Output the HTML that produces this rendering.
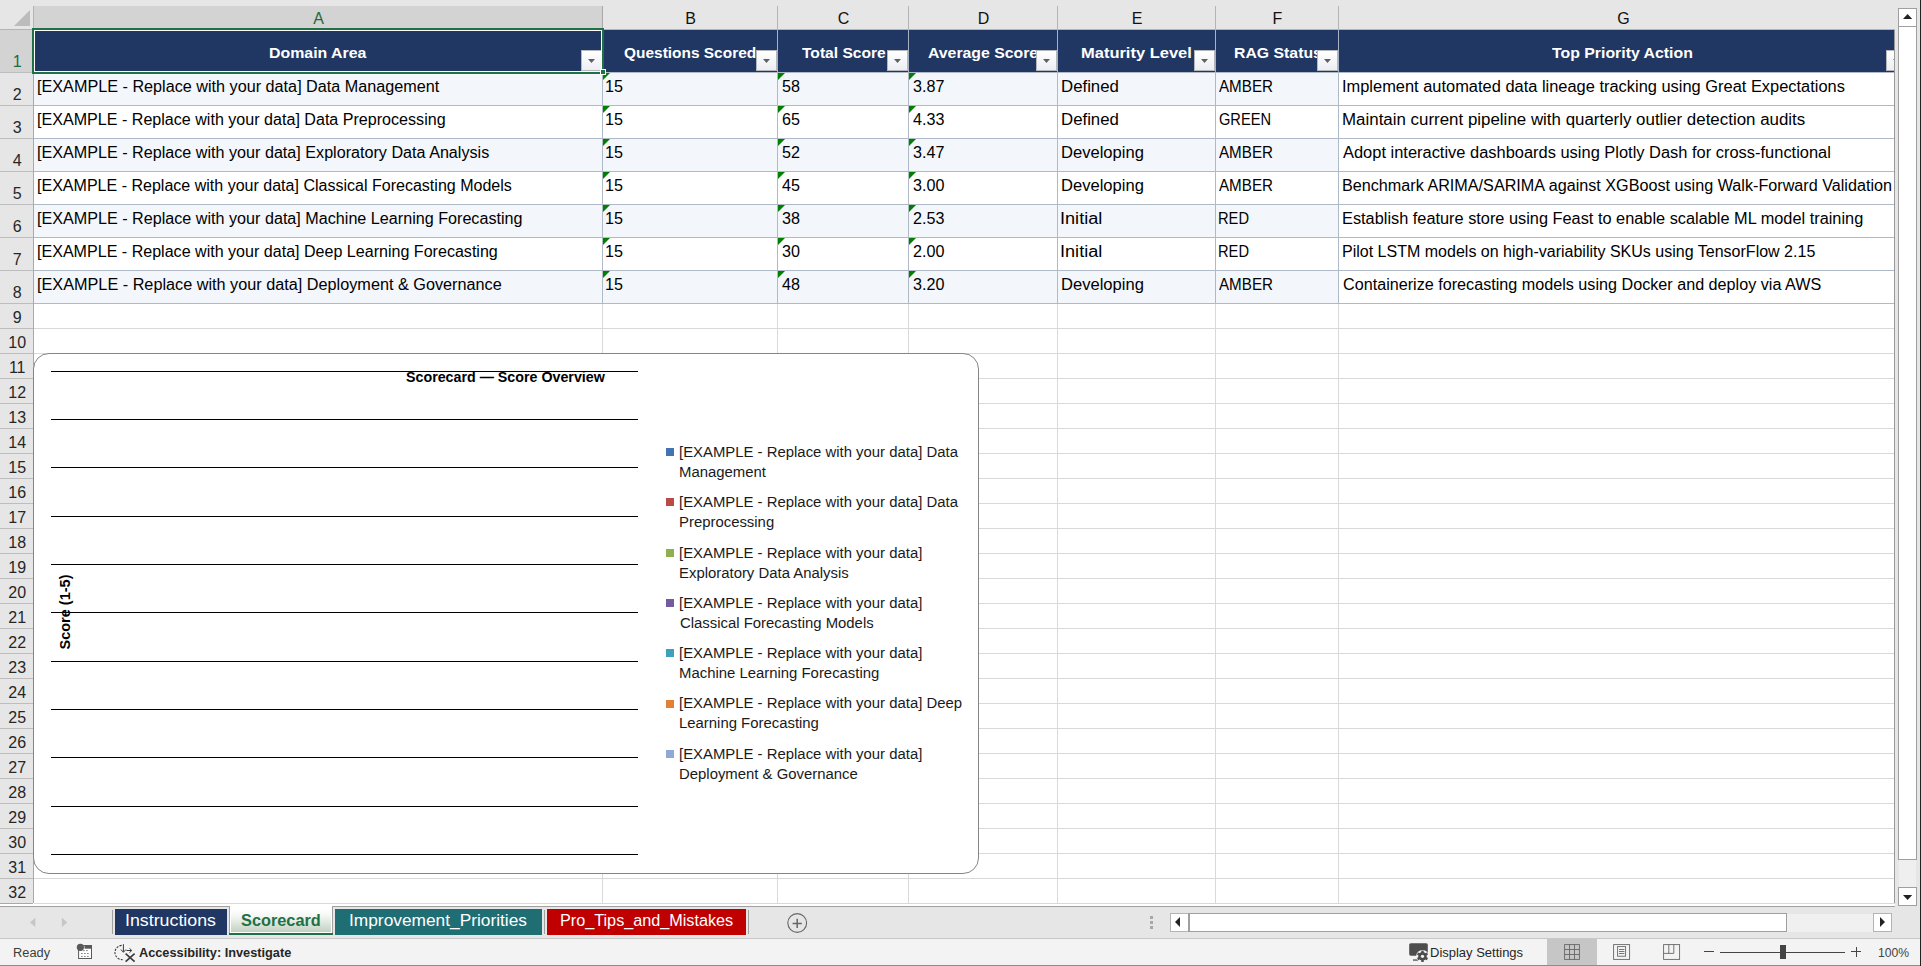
<!DOCTYPE html>
<html><head><meta charset="utf-8"><style>
html,body{margin:0;padding:0;}
body{width:1921px;height:966px;position:relative;overflow:hidden;background:#fff;font-family:"Liberation Sans", sans-serif;}
body div{position:absolute;box-sizing:content-box;}
.t{white-space:nowrap;}
</style></head><body>
<div style="left:0px;top:0px;width:1921px;height:29px;background:#e6e6e6"></div><div style="left:0px;top:29px;width:33px;height:874px;background:#e6e6e6"></div><div style="left:34px;top:6px;width:568px;height:22px;background:#d3d3d3"></div><div style="left:0px;top:30px;width:33px;height:42px;background:#d3d3d3"></div><div style="left:33px;top:6px;width:1px;height:23px;background:#b4b4b4"></div><div style="left:602px;top:6px;width:1px;height:23px;background:#b4b4b4"></div><div style="left:777px;top:6px;width:1px;height:23px;background:#b4b4b4"></div><div style="left:908px;top:6px;width:1px;height:23px;background:#b4b4b4"></div><div style="left:1057px;top:6px;width:1px;height:23px;background:#b4b4b4"></div><div style="left:1215px;top:6px;width:1px;height:23px;background:#b4b4b4"></div><div style="left:1338px;top:6px;width:1px;height:23px;background:#b4b4b4"></div><div style="left:602px;top:6px;width:1px;height:23px;background:#a9a9a9"></div><div style="left:0px;top:29px;width:1895px;height:1px;background:#b4b4b4"></div><svg style="position:absolute;left:14px;top:10px" width="17" height="17"><polygon points="16,0 16,16 0,16" fill="#bcbcbc"/></svg><div class="t" style="left:313.16px;top:11.26px;font-size:16px;line-height:16px;font-weight:400;color:#1e6b3e;">A</div><div class="t" style="left:685.16px;top:11.26px;font-size:16px;line-height:16px;font-weight:400;color:#111;">B</div><div class="t" style="left:837.72px;top:11.26px;font-size:16px;line-height:16px;font-weight:400;color:#111;">C</div><div class="t" style="left:977.72px;top:11.26px;font-size:16px;line-height:16px;font-weight:400;color:#111;">D</div><div class="t" style="left:1131.66px;top:11.26px;font-size:16px;line-height:16px;font-weight:400;color:#111;">E</div><div class="t" style="left:1272.61px;top:11.26px;font-size:16px;line-height:16px;font-weight:400;color:#111;">F</div><div class="t" style="left:1617.28px;top:11.26px;font-size:16px;line-height:16px;font-weight:400;color:#111;">G</div><div style="left:0px;top:72px;width:33px;height:1px;background:#bdbdbd"></div><div class="t" style="left:12.75px;top:54.26px;font-size:16px;line-height:16px;font-weight:400;color:#1e6b3e;">1</div><div style="left:0px;top:105px;width:33px;height:1px;background:#bdbdbd"></div><div class="t" style="left:12.75px;top:87.26px;font-size:16px;line-height:16px;font-weight:400;color:#262626;">2</div><div style="left:0px;top:138px;width:33px;height:1px;background:#bdbdbd"></div><div class="t" style="left:12.75px;top:120.26px;font-size:16px;line-height:16px;font-weight:400;color:#262626;">3</div><div style="left:0px;top:171px;width:33px;height:1px;background:#bdbdbd"></div><div class="t" style="left:12.75px;top:153.26px;font-size:16px;line-height:16px;font-weight:400;color:#262626;">4</div><div style="left:0px;top:204px;width:33px;height:1px;background:#bdbdbd"></div><div class="t" style="left:12.75px;top:186.26px;font-size:16px;line-height:16px;font-weight:400;color:#262626;">5</div><div style="left:0px;top:237px;width:33px;height:1px;background:#bdbdbd"></div><div class="t" style="left:12.75px;top:219.26px;font-size:16px;line-height:16px;font-weight:400;color:#262626;">6</div><div style="left:0px;top:270px;width:33px;height:1px;background:#bdbdbd"></div><div class="t" style="left:12.75px;top:252.26px;font-size:16px;line-height:16px;font-weight:400;color:#262626;">7</div><div style="left:0px;top:303px;width:33px;height:1px;background:#bdbdbd"></div><div class="t" style="left:12.75px;top:285.26px;font-size:16px;line-height:16px;font-weight:400;color:#262626;">8</div><div style="left:0px;top:328px;width:33px;height:1px;background:#bdbdbd"></div><div class="t" style="left:12.75px;top:310.26px;font-size:16px;line-height:16px;font-weight:400;color:#262626;">9</div><div style="left:0px;top:353px;width:33px;height:1px;background:#bdbdbd"></div><div class="t" style="left:8.30px;top:335.26px;font-size:16px;line-height:16px;font-weight:400;color:#262626;">10</div><div style="left:0px;top:378px;width:33px;height:1px;background:#bdbdbd"></div><div class="t" style="left:8.90px;top:360.26px;font-size:16px;line-height:16px;font-weight:400;color:#262626;">11</div><div style="left:0px;top:403px;width:33px;height:1px;background:#bdbdbd"></div><div class="t" style="left:8.30px;top:385.26px;font-size:16px;line-height:16px;font-weight:400;color:#262626;">12</div><div style="left:0px;top:428px;width:33px;height:1px;background:#bdbdbd"></div><div class="t" style="left:8.30px;top:410.26px;font-size:16px;line-height:16px;font-weight:400;color:#262626;">13</div><div style="left:0px;top:453px;width:33px;height:1px;background:#bdbdbd"></div><div class="t" style="left:8.30px;top:435.26px;font-size:16px;line-height:16px;font-weight:400;color:#262626;">14</div><div style="left:0px;top:478px;width:33px;height:1px;background:#bdbdbd"></div><div class="t" style="left:8.30px;top:460.26px;font-size:16px;line-height:16px;font-weight:400;color:#262626;">15</div><div style="left:0px;top:503px;width:33px;height:1px;background:#bdbdbd"></div><div class="t" style="left:8.30px;top:485.26px;font-size:16px;line-height:16px;font-weight:400;color:#262626;">16</div><div style="left:0px;top:528px;width:33px;height:1px;background:#bdbdbd"></div><div class="t" style="left:8.30px;top:510.26px;font-size:16px;line-height:16px;font-weight:400;color:#262626;">17</div><div style="left:0px;top:553px;width:33px;height:1px;background:#bdbdbd"></div><div class="t" style="left:8.30px;top:535.26px;font-size:16px;line-height:16px;font-weight:400;color:#262626;">18</div><div style="left:0px;top:578px;width:33px;height:1px;background:#bdbdbd"></div><div class="t" style="left:8.30px;top:560.26px;font-size:16px;line-height:16px;font-weight:400;color:#262626;">19</div><div style="left:0px;top:603px;width:33px;height:1px;background:#bdbdbd"></div><div class="t" style="left:8.30px;top:585.26px;font-size:16px;line-height:16px;font-weight:400;color:#262626;">20</div><div style="left:0px;top:628px;width:33px;height:1px;background:#bdbdbd"></div><div class="t" style="left:8.30px;top:610.26px;font-size:16px;line-height:16px;font-weight:400;color:#262626;">21</div><div style="left:0px;top:653px;width:33px;height:1px;background:#bdbdbd"></div><div class="t" style="left:8.30px;top:635.26px;font-size:16px;line-height:16px;font-weight:400;color:#262626;">22</div><div style="left:0px;top:678px;width:33px;height:1px;background:#bdbdbd"></div><div class="t" style="left:8.30px;top:660.26px;font-size:16px;line-height:16px;font-weight:400;color:#262626;">23</div><div style="left:0px;top:703px;width:33px;height:1px;background:#bdbdbd"></div><div class="t" style="left:8.30px;top:685.26px;font-size:16px;line-height:16px;font-weight:400;color:#262626;">24</div><div style="left:0px;top:728px;width:33px;height:1px;background:#bdbdbd"></div><div class="t" style="left:8.30px;top:710.26px;font-size:16px;line-height:16px;font-weight:400;color:#262626;">25</div><div style="left:0px;top:753px;width:33px;height:1px;background:#bdbdbd"></div><div class="t" style="left:8.30px;top:735.26px;font-size:16px;line-height:16px;font-weight:400;color:#262626;">26</div><div style="left:0px;top:778px;width:33px;height:1px;background:#bdbdbd"></div><div class="t" style="left:8.30px;top:760.26px;font-size:16px;line-height:16px;font-weight:400;color:#262626;">27</div><div style="left:0px;top:803px;width:33px;height:1px;background:#bdbdbd"></div><div class="t" style="left:8.30px;top:785.26px;font-size:16px;line-height:16px;font-weight:400;color:#262626;">28</div><div style="left:0px;top:828px;width:33px;height:1px;background:#bdbdbd"></div><div class="t" style="left:8.30px;top:810.26px;font-size:16px;line-height:16px;font-weight:400;color:#262626;">29</div><div style="left:0px;top:853px;width:33px;height:1px;background:#bdbdbd"></div><div class="t" style="left:8.30px;top:835.26px;font-size:16px;line-height:16px;font-weight:400;color:#262626;">30</div><div style="left:0px;top:878px;width:33px;height:1px;background:#bdbdbd"></div><div class="t" style="left:8.30px;top:860.26px;font-size:16px;line-height:16px;font-weight:400;color:#262626;">31</div><div style="left:0px;top:903px;width:33px;height:1px;background:#bdbdbd"></div><div class="t" style="left:8.30px;top:885.26px;font-size:16px;line-height:16px;font-weight:400;color:#262626;">32</div><div style="left:33px;top:29px;width:1px;height:874px;background:#a9a9a9"></div><div style="left:34px;top:30px;width:1861px;height:873px;background:#fff"></div><div style="left:34px;top:328px;width:1861px;height:1px;background:#d9d9d9"></div><div style="left:34px;top:353px;width:1861px;height:1px;background:#d9d9d9"></div><div style="left:34px;top:378px;width:1861px;height:1px;background:#d9d9d9"></div><div style="left:34px;top:403px;width:1861px;height:1px;background:#d9d9d9"></div><div style="left:34px;top:428px;width:1861px;height:1px;background:#d9d9d9"></div><div style="left:34px;top:453px;width:1861px;height:1px;background:#d9d9d9"></div><div style="left:34px;top:478px;width:1861px;height:1px;background:#d9d9d9"></div><div style="left:34px;top:503px;width:1861px;height:1px;background:#d9d9d9"></div><div style="left:34px;top:528px;width:1861px;height:1px;background:#d9d9d9"></div><div style="left:34px;top:553px;width:1861px;height:1px;background:#d9d9d9"></div><div style="left:34px;top:578px;width:1861px;height:1px;background:#d9d9d9"></div><div style="left:34px;top:603px;width:1861px;height:1px;background:#d9d9d9"></div><div style="left:34px;top:628px;width:1861px;height:1px;background:#d9d9d9"></div><div style="left:34px;top:653px;width:1861px;height:1px;background:#d9d9d9"></div><div style="left:34px;top:678px;width:1861px;height:1px;background:#d9d9d9"></div><div style="left:34px;top:703px;width:1861px;height:1px;background:#d9d9d9"></div><div style="left:34px;top:728px;width:1861px;height:1px;background:#d9d9d9"></div><div style="left:34px;top:753px;width:1861px;height:1px;background:#d9d9d9"></div><div style="left:34px;top:778px;width:1861px;height:1px;background:#d9d9d9"></div><div style="left:34px;top:803px;width:1861px;height:1px;background:#d9d9d9"></div><div style="left:34px;top:828px;width:1861px;height:1px;background:#d9d9d9"></div><div style="left:34px;top:853px;width:1861px;height:1px;background:#d9d9d9"></div><div style="left:34px;top:878px;width:1861px;height:1px;background:#d9d9d9"></div><div style="left:34px;top:903px;width:1861px;height:1px;background:#d9d9d9"></div><div style="left:602px;top:303px;width:1px;height:600px;background:#d9d9d9"></div><div style="left:777px;top:303px;width:1px;height:600px;background:#d9d9d9"></div><div style="left:908px;top:303px;width:1px;height:600px;background:#d9d9d9"></div><div style="left:1057px;top:303px;width:1px;height:600px;background:#d9d9d9"></div><div style="left:1215px;top:303px;width:1px;height:600px;background:#d9d9d9"></div><div style="left:1338px;top:303px;width:1px;height:600px;background:#d9d9d9"></div><div style="left:34px;top:30px;width:1861px;height:42px;background:#203764"></div><div class="t" style="left:268.67px;top:44.88px;font-size:15.5px;line-height:15.5px;font-weight:700;color:#fff;transform:scaleX(1.0254);transform-origin:0 0;">Domain Area</div><div class="t" style="left:623.80px;top:44.88px;font-size:15.5px;line-height:15.5px;font-weight:700;color:#fff;transform:scaleX(0.9964);transform-origin:0 0;">Questions Scored</div><div class="t" style="left:801.50px;top:44.88px;font-size:15.5px;line-height:15.5px;font-weight:700;color:#fff;transform:scaleX(1.0055);transform-origin:0 0;">Total Score</div><div class="t" style="left:928.43px;top:44.88px;font-size:15.5px;line-height:15.5px;font-weight:700;color:#fff;transform:scaleX(1.0200);transform-origin:0 0;">Average Score</div><div class="t" style="left:1081.34px;top:44.88px;font-size:15.5px;line-height:15.5px;font-weight:700;color:#fff;transform:scaleX(1.0630);transform-origin:0 0;">Maturity Level</div><div class="t" style="left:1233.58px;top:44.88px;font-size:15.5px;line-height:15.5px;font-weight:700;color:#fff;transform:scaleX(1.0200);transform-origin:0 0;">RAG Status</div><div class="t" style="left:1552.40px;top:44.88px;font-size:15.5px;line-height:15.5px;font-weight:700;color:#fff;transform:scaleX(1.0226);transform-origin:0 0;">Top Priority Action</div><div style="left:602px;top:30px;width:1px;height:42px;background:#a6b1c4"></div><div style="left:777px;top:30px;width:1px;height:42px;background:#a6b1c4"></div><div style="left:908px;top:30px;width:1px;height:42px;background:#a6b1c4"></div><div style="left:1057px;top:30px;width:1px;height:42px;background:#a6b1c4"></div><div style="left:1215px;top:30px;width:1px;height:42px;background:#a6b1c4"></div><div style="left:1338px;top:30px;width:1px;height:42px;background:#a6b1c4"></div><div style="left:581px;top:50px;width:19px;height:19px;border:1px solid #b4b7bd;background:linear-gradient(#ffffff,#eceef3);"></div><svg style="position:absolute;left:588px;top:59px" width="8" height="5"><polygon points="0,0 7,0 3.5,4" fill="#606060"/></svg><div style="left:756px;top:50px;width:19px;height:19px;border:1px solid #b4b7bd;background:linear-gradient(#ffffff,#eceef3);"></div><svg style="position:absolute;left:763px;top:59px" width="8" height="5"><polygon points="0,0 7,0 3.5,4" fill="#606060"/></svg><div style="left:887px;top:50px;width:19px;height:19px;border:1px solid #b4b7bd;background:linear-gradient(#ffffff,#eceef3);"></div><svg style="position:absolute;left:894px;top:59px" width="8" height="5"><polygon points="0,0 7,0 3.5,4" fill="#606060"/></svg><div style="left:1036px;top:50px;width:19px;height:19px;border:1px solid #b4b7bd;background:linear-gradient(#ffffff,#eceef3);"></div><svg style="position:absolute;left:1043px;top:59px" width="8" height="5"><polygon points="0,0 7,0 3.5,4" fill="#606060"/></svg><div style="left:1194px;top:50px;width:19px;height:19px;border:1px solid #b4b7bd;background:linear-gradient(#ffffff,#eceef3);"></div><svg style="position:absolute;left:1201px;top:59px" width="8" height="5"><polygon points="0,0 7,0 3.5,4" fill="#606060"/></svg><div style="left:1317px;top:50px;width:19px;height:19px;border:1px solid #b4b7bd;background:linear-gradient(#ffffff,#eceef3);"></div><svg style="position:absolute;left:1324px;top:59px" width="8" height="5"><polygon points="0,0 7,0 3.5,4" fill="#606060"/></svg><div style="left:1886px;top:50px;width:19px;height:19px;border:1px solid #b4b7bd;background:linear-gradient(#ffffff,#eceef3);"></div><svg style="position:absolute;left:1893px;top:59px" width="8" height="5"><polygon points="0,0 7,0 3.5,4" fill="#606060"/></svg><div style="left:34px;top:73px;width:1304px;height:32px;background:#f3f6fb"></div><div class="t" style="left:36.96px;top:78.79px;font-size:15.6px;line-height:15.6px;font-weight:400;color:#000;transform:scaleX(1.0385);transform-origin:0 0;">[EXAMPLE - Replace with your data] Data Management</div><div class="t" style="left:605.47px;top:78.79px;font-size:15.6px;line-height:15.6px;font-weight:400;color:#000;transform:scaleX(1.0350);transform-origin:0 0;">15</div><div class="t" style="left:781.50px;top:78.79px;font-size:15.6px;line-height:15.6px;font-weight:400;color:#000;transform:scaleX(1.0350);transform-origin:0 0;">58</div><div class="t" style="left:912.50px;top:78.79px;font-size:15.6px;line-height:15.6px;font-weight:400;color:#000;transform:scaleX(1.0350);transform-origin:0 0;">3.87</div><div class="t" style="left:1060.92px;top:78.79px;font-size:15.6px;line-height:15.6px;font-weight:400;color:#000;transform:scaleX(1.0773);transform-origin:0 0;">Defined</div><div class="t" style="left:1219.40px;top:78.79px;font-size:15.6px;line-height:15.6px;font-weight:400;color:#000;transform:scaleX(0.9730);transform-origin:0 0;">AMBER</div><div class="t" style="left:1341.95px;top:78.79px;font-size:15.6px;line-height:15.6px;font-weight:400;color:#000;transform:scaleX(1.0530);transform-origin:0 0;">Implement automated data lineage tracking using Great Expectations</div><svg style="position:absolute;left:603px;top:73px" width="8" height="8"><polygon points="0,0 7,0 0,7" fill="#008000"/></svg><svg style="position:absolute;left:778px;top:73px" width="8" height="8"><polygon points="0,0 7,0 0,7" fill="#008000"/></svg><svg style="position:absolute;left:909px;top:73px" width="8" height="8"><polygon points="0,0 7,0 0,7" fill="#008000"/></svg><div class="t" style="left:36.97px;top:111.79px;font-size:15.6px;line-height:15.6px;font-weight:400;color:#000;transform:scaleX(1.0316);transform-origin:0 0;">[EXAMPLE - Replace with your data] Data Preprocessing</div><div class="t" style="left:605.47px;top:111.79px;font-size:15.6px;line-height:15.6px;font-weight:400;color:#000;transform:scaleX(1.0350);transform-origin:0 0;">15</div><div class="t" style="left:781.50px;top:111.79px;font-size:15.6px;line-height:15.6px;font-weight:400;color:#000;transform:scaleX(1.0350);transform-origin:0 0;">65</div><div class="t" style="left:912.50px;top:111.79px;font-size:15.6px;line-height:15.6px;font-weight:400;color:#000;transform:scaleX(1.0350);transform-origin:0 0;">4.33</div><div class="t" style="left:1060.92px;top:111.79px;font-size:15.6px;line-height:15.6px;font-weight:400;color:#000;transform:scaleX(1.0773);transform-origin:0 0;">Defined</div><div class="t" style="left:1219.30px;top:111.79px;font-size:15.6px;line-height:15.6px;font-weight:400;color:#000;transform:scaleX(0.9374);transform-origin:0 0;">GREEN</div><div class="t" style="left:1341.92px;top:111.79px;font-size:15.6px;line-height:15.6px;font-weight:400;color:#000;transform:scaleX(1.0841);transform-origin:0 0;">Maintain current pipeline with quarterly outlier detection audits</div><svg style="position:absolute;left:603px;top:106px" width="8" height="8"><polygon points="0,0 7,0 0,7" fill="#008000"/></svg><svg style="position:absolute;left:778px;top:106px" width="8" height="8"><polygon points="0,0 7,0 0,7" fill="#008000"/></svg><svg style="position:absolute;left:909px;top:106px" width="8" height="8"><polygon points="0,0 7,0 0,7" fill="#008000"/></svg><div style="left:34px;top:139px;width:1304px;height:32px;background:#f3f6fb"></div><div class="t" style="left:36.96px;top:144.79px;font-size:15.6px;line-height:15.6px;font-weight:400;color:#000;transform:scaleX(1.0353);transform-origin:0 0;">[EXAMPLE - Replace with your data] Exploratory Data Analysis</div><div class="t" style="left:605.47px;top:144.79px;font-size:15.6px;line-height:15.6px;font-weight:400;color:#000;transform:scaleX(1.0350);transform-origin:0 0;">15</div><div class="t" style="left:781.50px;top:144.79px;font-size:15.6px;line-height:15.6px;font-weight:400;color:#000;transform:scaleX(1.0350);transform-origin:0 0;">52</div><div class="t" style="left:912.50px;top:144.79px;font-size:15.6px;line-height:15.6px;font-weight:400;color:#000;transform:scaleX(1.0350);transform-origin:0 0;">3.47</div><div class="t" style="left:1060.54px;top:144.79px;font-size:15.6px;line-height:15.6px;font-weight:400;color:#000;transform:scaleX(1.0622);transform-origin:0 0;">Developing</div><div class="t" style="left:1219.40px;top:144.79px;font-size:15.6px;line-height:15.6px;font-weight:400;color:#000;transform:scaleX(0.9730);transform-origin:0 0;">AMBER</div><div class="t" style="left:1343.00px;top:144.79px;font-size:15.6px;line-height:15.6px;font-weight:400;color:#000;transform:scaleX(1.0541);transform-origin:0 0;">Adopt interactive dashboards using Plotly Dash for cross-functional</div><svg style="position:absolute;left:603px;top:139px" width="8" height="8"><polygon points="0,0 7,0 0,7" fill="#008000"/></svg><svg style="position:absolute;left:778px;top:139px" width="8" height="8"><polygon points="0,0 7,0 0,7" fill="#008000"/></svg><svg style="position:absolute;left:909px;top:139px" width="8" height="8"><polygon points="0,0 7,0 0,7" fill="#008000"/></svg><div class="t" style="left:36.97px;top:177.79px;font-size:15.6px;line-height:15.6px;font-weight:400;color:#000;transform:scaleX(1.0279);transform-origin:0 0;">[EXAMPLE - Replace with your data] Classical Forecasting Models</div><div class="t" style="left:605.47px;top:177.79px;font-size:15.6px;line-height:15.6px;font-weight:400;color:#000;transform:scaleX(1.0350);transform-origin:0 0;">15</div><div class="t" style="left:781.50px;top:177.79px;font-size:15.6px;line-height:15.6px;font-weight:400;color:#000;transform:scaleX(1.0350);transform-origin:0 0;">45</div><div class="t" style="left:912.50px;top:177.79px;font-size:15.6px;line-height:15.6px;font-weight:400;color:#000;transform:scaleX(1.0350);transform-origin:0 0;">3.00</div><div class="t" style="left:1060.54px;top:177.79px;font-size:15.6px;line-height:15.6px;font-weight:400;color:#000;transform:scaleX(1.0622);transform-origin:0 0;">Developing</div><div class="t" style="left:1219.40px;top:177.79px;font-size:15.6px;line-height:15.6px;font-weight:400;color:#000;transform:scaleX(0.9730);transform-origin:0 0;">AMBER</div><div class="t" style="left:1341.96px;top:177.79px;font-size:15.6px;line-height:15.6px;font-weight:400;color:#000;transform:scaleX(1.0370);transform-origin:0 0;">Benchmark ARIMA/SARIMA against XGBoost using Walk-Forward Validation</div><svg style="position:absolute;left:603px;top:172px" width="8" height="8"><polygon points="0,0 7,0 0,7" fill="#008000"/></svg><svg style="position:absolute;left:778px;top:172px" width="8" height="8"><polygon points="0,0 7,0 0,7" fill="#008000"/></svg><svg style="position:absolute;left:909px;top:172px" width="8" height="8"><polygon points="0,0 7,0 0,7" fill="#008000"/></svg><div style="left:34px;top:205px;width:1304px;height:32px;background:#f3f6fb"></div><div class="t" style="left:36.96px;top:210.79px;font-size:15.6px;line-height:15.6px;font-weight:400;color:#000;transform:scaleX(1.0354);transform-origin:0 0;">[EXAMPLE - Replace with your data] Machine Learning Forecasting</div><div class="t" style="left:605.47px;top:210.79px;font-size:15.6px;line-height:15.6px;font-weight:400;color:#000;transform:scaleX(1.0350);transform-origin:0 0;">15</div><div class="t" style="left:781.50px;top:210.79px;font-size:15.6px;line-height:15.6px;font-weight:400;color:#000;transform:scaleX(1.0350);transform-origin:0 0;">38</div><div class="t" style="left:912.50px;top:210.79px;font-size:15.6px;line-height:15.6px;font-weight:400;color:#000;transform:scaleX(1.0350);transform-origin:0 0;">2.53</div><div class="t" style="left:1060.44px;top:210.79px;font-size:15.6px;line-height:15.6px;font-weight:400;color:#000;transform:scaleX(1.1620);transform-origin:0 0;">Initial</div><div class="t" style="left:1218.46px;top:210.79px;font-size:15.6px;line-height:15.6px;font-weight:400;color:#000;transform:scaleX(0.9412);transform-origin:0 0;">RED</div><div class="t" style="left:1341.95px;top:210.79px;font-size:15.6px;line-height:15.6px;font-weight:400;color:#000;transform:scaleX(1.0470);transform-origin:0 0;">Establish feature store using Feast to enable scalable ML model training</div><svg style="position:absolute;left:603px;top:205px" width="8" height="8"><polygon points="0,0 7,0 0,7" fill="#008000"/></svg><svg style="position:absolute;left:778px;top:205px" width="8" height="8"><polygon points="0,0 7,0 0,7" fill="#008000"/></svg><svg style="position:absolute;left:909px;top:205px" width="8" height="8"><polygon points="0,0 7,0 0,7" fill="#008000"/></svg><div class="t" style="left:36.97px;top:243.79px;font-size:15.6px;line-height:15.6px;font-weight:400;color:#000;transform:scaleX(1.0303);transform-origin:0 0;">[EXAMPLE - Replace with your data] Deep Learning Forecasting</div><div class="t" style="left:605.47px;top:243.79px;font-size:15.6px;line-height:15.6px;font-weight:400;color:#000;transform:scaleX(1.0350);transform-origin:0 0;">15</div><div class="t" style="left:781.50px;top:243.79px;font-size:15.6px;line-height:15.6px;font-weight:400;color:#000;transform:scaleX(1.0350);transform-origin:0 0;">30</div><div class="t" style="left:912.50px;top:243.79px;font-size:15.6px;line-height:15.6px;font-weight:400;color:#000;transform:scaleX(1.0350);transform-origin:0 0;">2.00</div><div class="t" style="left:1060.44px;top:243.79px;font-size:15.6px;line-height:15.6px;font-weight:400;color:#000;transform:scaleX(1.1620);transform-origin:0 0;">Initial</div><div class="t" style="left:1218.46px;top:243.79px;font-size:15.6px;line-height:15.6px;font-weight:400;color:#000;transform:scaleX(0.9412);transform-origin:0 0;">RED</div><div class="t" style="left:1341.97px;top:243.79px;font-size:15.6px;line-height:15.6px;font-weight:400;color:#000;transform:scaleX(1.0271);transform-origin:0 0;">Pilot LSTM models on high-variability SKUs using TensorFlow 2.15</div><svg style="position:absolute;left:603px;top:238px" width="8" height="8"><polygon points="0,0 7,0 0,7" fill="#008000"/></svg><svg style="position:absolute;left:778px;top:238px" width="8" height="8"><polygon points="0,0 7,0 0,7" fill="#008000"/></svg><svg style="position:absolute;left:909px;top:238px" width="8" height="8"><polygon points="0,0 7,0 0,7" fill="#008000"/></svg><div style="left:34px;top:271px;width:1304px;height:32px;background:#f3f6fb"></div><div class="t" style="left:36.96px;top:276.79px;font-size:15.6px;line-height:15.6px;font-weight:400;color:#000;transform:scaleX(1.0412);transform-origin:0 0;">[EXAMPLE - Replace with your data] Deployment &amp; Governance</div><div class="t" style="left:605.47px;top:276.79px;font-size:15.6px;line-height:15.6px;font-weight:400;color:#000;transform:scaleX(1.0350);transform-origin:0 0;">15</div><div class="t" style="left:781.50px;top:276.79px;font-size:15.6px;line-height:15.6px;font-weight:400;color:#000;transform:scaleX(1.0350);transform-origin:0 0;">48</div><div class="t" style="left:912.50px;top:276.79px;font-size:15.6px;line-height:15.6px;font-weight:400;color:#000;transform:scaleX(1.0350);transform-origin:0 0;">3.20</div><div class="t" style="left:1060.54px;top:276.79px;font-size:15.6px;line-height:15.6px;font-weight:400;color:#000;transform:scaleX(1.0622);transform-origin:0 0;">Developing</div><div class="t" style="left:1219.40px;top:276.79px;font-size:15.6px;line-height:15.6px;font-weight:400;color:#000;transform:scaleX(0.9730);transform-origin:0 0;">AMBER</div><div class="t" style="left:1343.00px;top:276.79px;font-size:15.6px;line-height:15.6px;font-weight:400;color:#000;transform:scaleX(1.0364);transform-origin:0 0;">Containerize forecasting models using Docker and deploy via AWS</div><svg style="position:absolute;left:603px;top:271px" width="8" height="8"><polygon points="0,0 7,0 0,7" fill="#008000"/></svg><svg style="position:absolute;left:778px;top:271px" width="8" height="8"><polygon points="0,0 7,0 0,7" fill="#008000"/></svg><svg style="position:absolute;left:909px;top:271px" width="8" height="8"><polygon points="0,0 7,0 0,7" fill="#008000"/></svg><div style="left:34px;top:72px;width:1861px;height:1px;background:#b0b9c6"></div><div style="left:34px;top:105px;width:1861px;height:1px;background:#b0b9c6"></div><div style="left:34px;top:138px;width:1861px;height:1px;background:#b0b9c6"></div><div style="left:34px;top:171px;width:1861px;height:1px;background:#b0b9c6"></div><div style="left:34px;top:204px;width:1861px;height:1px;background:#b0b9c6"></div><div style="left:34px;top:237px;width:1861px;height:1px;background:#b0b9c6"></div><div style="left:34px;top:270px;width:1861px;height:1px;background:#b0b9c6"></div><div style="left:34px;top:303px;width:1861px;height:1px;background:#b0b9c6"></div><div style="left:602px;top:73px;width:1px;height:230px;background:#b0b9c6"></div><div style="left:777px;top:73px;width:1px;height:230px;background:#b0b9c6"></div><div style="left:908px;top:73px;width:1px;height:230px;background:#b0b9c6"></div><div style="left:1057px;top:73px;width:1px;height:230px;background:#b0b9c6"></div><div style="left:1215px;top:73px;width:1px;height:230px;background:#b0b9c6"></div><div style="left:1338px;top:73px;width:1px;height:230px;background:#b0b9c6"></div><div style="left:1894px;top:30px;width:1px;height:873px;background:#9a9a9a"></div><div style="left:32px;top:28px;width:572px;height:2px;background:#1e7145"></div><div style="left:32px;top:28px;width:2px;height:46px;background:#1e7145"></div><div style="left:602px;top:28px;width:2px;height:46px;background:#1e7145"></div><div style="left:32px;top:72px;width:572px;height:2px;background:#1e7145"></div><div style="left:34px;top:30px;width:568px;height:1px;background:#fff"></div><div style="left:34px;top:30px;width:1px;height:42px;background:#fff"></div><div style="left:601px;top:30px;width:1px;height:42px;background:#fff"></div><div style="left:34px;top:71px;width:568px;height:1px;background:#fff"></div><div style="left:600px;top:69px;width:6px;height:6px;background:#1e7145;border:1px solid #fff;box-sizing:border-box"></div><div style="left:33px;top:353px;width:944px;height:519px;border:1px solid #858585;border-radius:16px;background:#fff"></div><div style="left:51px;top:371px;width:587px;height:1px;background:#000"></div><div style="left:51px;top:419px;width:587px;height:1px;background:#000"></div><div style="left:51px;top:467px;width:587px;height:1px;background:#000"></div><div style="left:51px;top:516px;width:587px;height:1px;background:#000"></div><div style="left:51px;top:564px;width:587px;height:1px;background:#000"></div><div style="left:51px;top:612px;width:587px;height:1px;background:#000"></div><div style="left:51px;top:661px;width:587px;height:1px;background:#000"></div><div style="left:51px;top:709px;width:587px;height:1px;background:#000"></div><div style="left:51px;top:757px;width:587px;height:1px;background:#000"></div><div style="left:51px;top:806px;width:587px;height:1px;background:#000"></div><div style="left:51px;top:854px;width:587px;height:1px;background:#000"></div><div class="t" style="left:406.30px;top:370.03px;font-size:14.5px;line-height:14.5px;font-weight:700;color:#000;transform:scaleX(0.9827);transform-origin:0 0;">Scorecard — Score Overview</div><div class="t" style="left:25px;top:604px;width:80px;height:16px;text-align:center;font-size:14.5px;line-height:16px;font-weight:700;transform:rotate(-90deg);transform-origin:40px 8px;">Score (1-5)</div><div style="left:666px;top:448px;width:8px;height:8px;background:#4372b5"></div><div class="t" style="left:679.02px;top:443.73px;font-size:15.2px;line-height:15.2px;font-weight:400;color:#1a1a1a;transform:scaleX(0.9805);transform-origin:0 0;">[EXAMPLE - Replace with your data] Data</div><div class="t" style="left:679.02px;top:463.73px;font-size:15.2px;line-height:15.2px;font-weight:400;color:#1a1a1a;transform:scaleX(0.9805);transform-origin:0 0;">Management</div><div style="left:666px;top:498px;width:8px;height:8px;background:#ba4a47"></div><div class="t" style="left:679.02px;top:493.73px;font-size:15.2px;line-height:15.2px;font-weight:400;color:#1a1a1a;transform:scaleX(0.9805);transform-origin:0 0;">[EXAMPLE - Replace with your data] Data</div><div class="t" style="left:679.02px;top:513.73px;font-size:15.2px;line-height:15.2px;font-weight:400;color:#1a1a1a;transform:scaleX(0.9805);transform-origin:0 0;">Preprocessing</div><div style="left:666px;top:549px;width:8px;height:8px;background:#8fb050"></div><div class="t" style="left:679.02px;top:544.73px;font-size:15.2px;line-height:15.2px;font-weight:400;color:#1a1a1a;transform:scaleX(0.9805);transform-origin:0 0;">[EXAMPLE - Replace with your data]</div><div class="t" style="left:679.02px;top:564.73px;font-size:15.2px;line-height:15.2px;font-weight:400;color:#1a1a1a;transform:scaleX(0.9805);transform-origin:0 0;">Exploratory Data Analysis</div><div style="left:666px;top:599px;width:8px;height:8px;background:#745a9e"></div><div class="t" style="left:679.02px;top:594.73px;font-size:15.2px;line-height:15.2px;font-weight:400;color:#1a1a1a;transform:scaleX(0.9805);transform-origin:0 0;">[EXAMPLE - Replace with your data]</div><div class="t" style="left:680.00px;top:614.73px;font-size:15.2px;line-height:15.2px;font-weight:400;color:#1a1a1a;transform:scaleX(0.9805);transform-origin:0 0;">Classical Forecasting Models</div><div style="left:666px;top:649px;width:8px;height:8px;background:#3ea0ba"></div><div class="t" style="left:679.02px;top:644.73px;font-size:15.2px;line-height:15.2px;font-weight:400;color:#1a1a1a;transform:scaleX(0.9805);transform-origin:0 0;">[EXAMPLE - Replace with your data]</div><div class="t" style="left:679.02px;top:664.73px;font-size:15.2px;line-height:15.2px;font-weight:400;color:#1a1a1a;transform:scaleX(0.9805);transform-origin:0 0;">Machine Learning Forecasting</div><div style="left:666px;top:700px;width:8px;height:8px;background:#e48033"></div><div class="t" style="left:679.02px;top:694.73px;font-size:15.2px;line-height:15.2px;font-weight:400;color:#1a1a1a;transform:scaleX(0.9805);transform-origin:0 0;">[EXAMPLE - Replace with your data] Deep</div><div class="t" style="left:679.02px;top:714.73px;font-size:15.2px;line-height:15.2px;font-weight:400;color:#1a1a1a;transform:scaleX(0.9805);transform-origin:0 0;">Learning Forecasting</div><div style="left:666px;top:750px;width:8px;height:8px;background:#8ea9d6"></div><div class="t" style="left:679.02px;top:745.73px;font-size:15.2px;line-height:15.2px;font-weight:400;color:#1a1a1a;transform:scaleX(0.9805);transform-origin:0 0;">[EXAMPLE - Replace with your data]</div><div class="t" style="left:679.02px;top:765.73px;font-size:15.2px;line-height:15.2px;font-weight:400;color:#1a1a1a;transform:scaleX(0.9805);transform-origin:0 0;">Deployment &amp; Governance</div><div style="left:1895px;top:0px;width:26px;height:938px;background:#e6e6e6"></div><div style="left:1898px;top:8px;width:17px;height:17px;border:1px solid #9f9f9f;background:#fff"></div><svg style="position:absolute;left:1903px;top:14px" width="10" height="6"><polygon points="4.6,0 9.2,5 0,5" fill="#222"/></svg><div style="left:1898px;top:26px;width:17px;height:832px;border:1px solid #9f9f9f;background:#fff"></div><div style="left:1899px;top:860px;width:17px;height:27px;background:#efefef"></div><div style="left:1898px;top:887px;width:17px;height:17px;border:1px solid #9f9f9f;background:#fff"></div><svg style="position:absolute;left:1903px;top:895px" width="10" height="6"><polygon points="0,0 9.2,0 4.6,5" fill="#222"/></svg><div style="left:1920px;top:0px;width:1px;height:966px;background:#222"></div><div style="left:0px;top:903px;width:33px;height:1px;background:#a9a9a9"></div><div style="left:34px;top:904px;width:1861px;height:2px;background:#fff"></div><div style="left:0px;top:906px;width:1895px;height:1px;background:#a0a0a0"></div><div style="left:0px;top:907px;width:1920px;height:31px;background:#e6e6e6"></div><svg style="position:absolute;left:29px;top:917px" width="8" height="11"><polygon points="1,5.4 6.3,0.8 6.3,9.9" fill="#c6c6c6"/></svg><svg style="position:absolute;left:61px;top:917px" width="8" height="11"><polygon points="0.9,0.8 6.2,5.4 0.9,9.9" fill="#c6c6c6"/></svg><div style="left:112px;top:910px;width:1px;height:24px;background:#a0a0a0"></div><div style="left:115px;top:909px;width:112px;height:26px;background:#203764"></div><div class="t" style="left:125.47px;top:912.14px;font-size:17.2px;line-height:17.2px;font-weight:400;color:#fff;transform:scaleX(1.0349);transform-origin:0 0;">Instructions</div><div style="left:229px;top:906px;width:104px;height:29px;background:#a0a0a0"></div><div style="left:230px;top:906px;width:102px;height:27px;background:#fff"></div><div style="left:231px;top:909px;width:100px;height:23px;background:linear-gradient(#ffffff 0%,#f4f7f4 30%,#c3d1c3 100%)"></div><div style="left:229px;top:933px;width:104px;height:2px;background:#1e7145"></div><div class="t" style="left:241.00px;top:912.14px;font-size:17.2px;line-height:17.2px;font-weight:700;color:#1e7145;transform:scaleX(0.9488);transform-origin:0 0;">Scorecard</div><div style="left:335px;top:909px;width:207px;height:26px;background:#1f6e74"></div><div class="t" style="left:349.39px;top:912.14px;font-size:17.2px;line-height:17.2px;font-weight:400;color:#fff;transform:scaleX(1.0073);transform-origin:0 0;">Improvement_Priorities</div><div style="left:547px;top:909px;width:199px;height:26px;background:#c00000"></div><div class="t" style="left:560.06px;top:912.14px;font-size:17.2px;line-height:17.2px;font-weight:400;color:#fff;transform:scaleX(0.9426);transform-origin:0 0;">Pro_Tips_and_Mistakes</div><div style="left:544px;top:910px;width:1px;height:24px;background:#a0a0a0"></div><div style="left:748px;top:910px;width:1px;height:24px;background:#a0a0a0"></div><svg style="position:absolute;left:786px;top:912px" width="23" height="23"><circle cx="11.2" cy="11" r="9.4" fill="none" stroke="#666" stroke-width="1.1"/><path d="M11.2 6.8v9.2M6.6 11.4h9.2" stroke="#666" stroke-width="1.5"/></svg><div style="left:1150px;top:916px;width:3px;height:3px;background:#a8a8a8"></div><div style="left:1150px;top:921px;width:3px;height:3px;background:#a8a8a8"></div><div style="left:1150px;top:926px;width:3px;height:3px;background:#a8a8a8"></div><div style="left:1170px;top:913px;width:17px;height:17px;border:1px solid #b4b4b4;background:#fff"></div><svg style="position:absolute;left:1175px;top:917px" width="6" height="10"><polygon points="5,0 5,10 0,5" fill="#222"/></svg><div style="left:1188px;top:913px;width:596px;height:17px;border:1px solid #9f9f9f;border-left:2px solid #9f9f9f;background:#fff"></div><div style="left:1787px;top:914px;width:86px;height:18px;background:#f0f0f0"></div><div style="left:1873px;top:913px;width:17px;height:17px;border:1px solid #b4b4b4;background:#fff"></div><svg style="position:absolute;left:1880px;top:917px" width="6" height="10"><polygon points="0,0 0,10 5,5" fill="#222"/></svg><div style="left:0px;top:938px;width:1920px;height:1px;background:#c8c8c8"></div><div style="left:0px;top:939px;width:1920px;height:26px;background:#f3f3f3"></div><div style="left:0px;top:965px;width:1920px;height:1px;background:#8c8c8c"></div><div class="t" style="left:12.97px;top:947.22px;font-size:12.5px;line-height:12.5px;font-weight:400;color:#3c3c3c;transform:scaleX(1.0256);transform-origin:0 0;">Ready</div><svg style="position:absolute;left:74px;top:941px" width="22" height="22" viewBox="74 941 22 22"><rect x="78.6" y="945.6" width="12.9" height="12.9" fill="#fff" stroke="#595959" stroke-width="1"/><rect x="84.5" y="945.1" width="7.4" height="3.6" fill="#595959"/><circle cx="80.4" cy="947.3" r="3.6" fill="#595959"/><g stroke="#595959" stroke-width="0.9"><path d="M83.2 950.6h1.4M86.2 950.6h1.4M81.2 953.5h1.4M84.2 953.5h1.4M87.2 953.5h1.4M81.2 956.4h1.4M84.2 956.4h1.4M87.2 956.4h1.4"/></g></svg><svg style="position:absolute;left:112px;top:941px" width="26" height="24" viewBox="112 941 26 24"><path d="M121.6 945.4 A6.9 6.9 0 1 0 122.6 959.6" fill="none" stroke="#3a3a3a" stroke-width="1.1" stroke-dasharray="2.2 1.2"/><path d="M123.4 944.2v7.5M120.9 949.5l2.5 2.8 2.5-2.8" fill="none" stroke="#3a3a3a" stroke-width="1"/><path d="M126.5 950.5h5M129.5 948.4l2.3 2.1-2.3 2.1" fill="none" stroke="#3a3a3a" stroke-width="1"/><path d="M125.6 953.6l9 8M134.6 953.6l-9 8" fill="none" stroke="#3a3a3a" stroke-width="1.6"/></svg><div class="t" style="left:138.50px;top:947.22px;font-size:12.5px;line-height:12.5px;font-weight:700;color:#262626;transform:scaleX(1.0193);transform-origin:0 0;">Accessibility: Investigate</div><svg style="position:absolute;left:1406px;top:940px" width="26" height="24" viewBox="1406 940 26 24"><rect x="1409.2" y="943.2" width="18.6" height="12.5" rx="1.6" fill="#4d4d4d"/><rect x="1413" y="959.4" width="5" height="1.3" fill="#4d4d4d"/><circle cx="1422.5" cy="956.3" r="6.3" fill="#f3f3f3"/><g fill="#4d4d4d"><circle cx="1422.5" cy="956.3" r="4.2"/><rect x="1421.3" y="950.6" width="2.4" height="11.4"/><rect x="1421.3" y="950.6" width="2.4" height="11.4" transform="rotate(60 1422.5 956.3)"/><rect x="1421.3" y="950.6" width="2.4" height="11.4" transform="rotate(120 1422.5 956.3)"/></g><circle cx="1422.5" cy="956.3" r="1.6" fill="#f3f3f3"/></svg><div class="t" style="left:1429.68px;top:946.85px;font-size:12.7px;line-height:12.7px;font-weight:400;color:#262626;transform:scaleX(1.0232);transform-origin:0 0;">Display Settings</div><div style="left:1547px;top:939px;width:50px;height:26px;background:#c6c6c6"></div><svg style="position:absolute;left:1560px;top:940px" width="24" height="24" viewBox="1560 940 24 24"><g fill="none" stroke="#666" stroke-width="0.9"><rect x="1564.6" y="944.6" width="14.8" height="14.8"/><path d="M1569.5 944.6v14.8M1574.5 944.6v14.8M1564.6 949.5h14.8M1564.6 954.5h14.8"/></g></svg><svg style="position:absolute;left:1610px;top:940px" width="24" height="24" viewBox="1610 940 24 24"><g fill="none" stroke="#666" stroke-width="0.9"><rect x="1613.6" y="944.6" width="16" height="14.8"/><rect x="1617.6" y="946.6" width="8" height="9.6"/><path d="M1619 949.5h5.4M1619 951.5h5.4M1619 953.5h5.4"/></g></svg><svg style="position:absolute;left:1660px;top:940px" width="24" height="24" viewBox="1660 940 24 24"><g fill="none" stroke="#666" stroke-width="0.9"><rect x="1663.6" y="944.6" width="16" height="14.8"/><path d="M1668.8 944.6v8.8M1673.8 944.6v8.8M1663.6 953.4h10.2"/></g></svg><div style="left:1704px;top:951px;width:10px;height:1px;background:#444"></div><div style="left:1720px;top:952px;width:125px;height:1px;background:#444"></div><div style="left:1780px;top:945px;width:6px;height:14px;background:#444"></div><div style="left:1851px;top:951px;width:10px;height:1px;background:#444"></div><div style="left:1855.5px;top:946.5px;width:1px;height:10px;background:#444"></div><div class="t" style="left:1878.00px;top:946.76px;font-size:12.8px;line-height:12.8px;font-weight:400;color:#444;transform:scaleX(0.9521);transform-origin:0 0;">100%</div>
</body></html>
